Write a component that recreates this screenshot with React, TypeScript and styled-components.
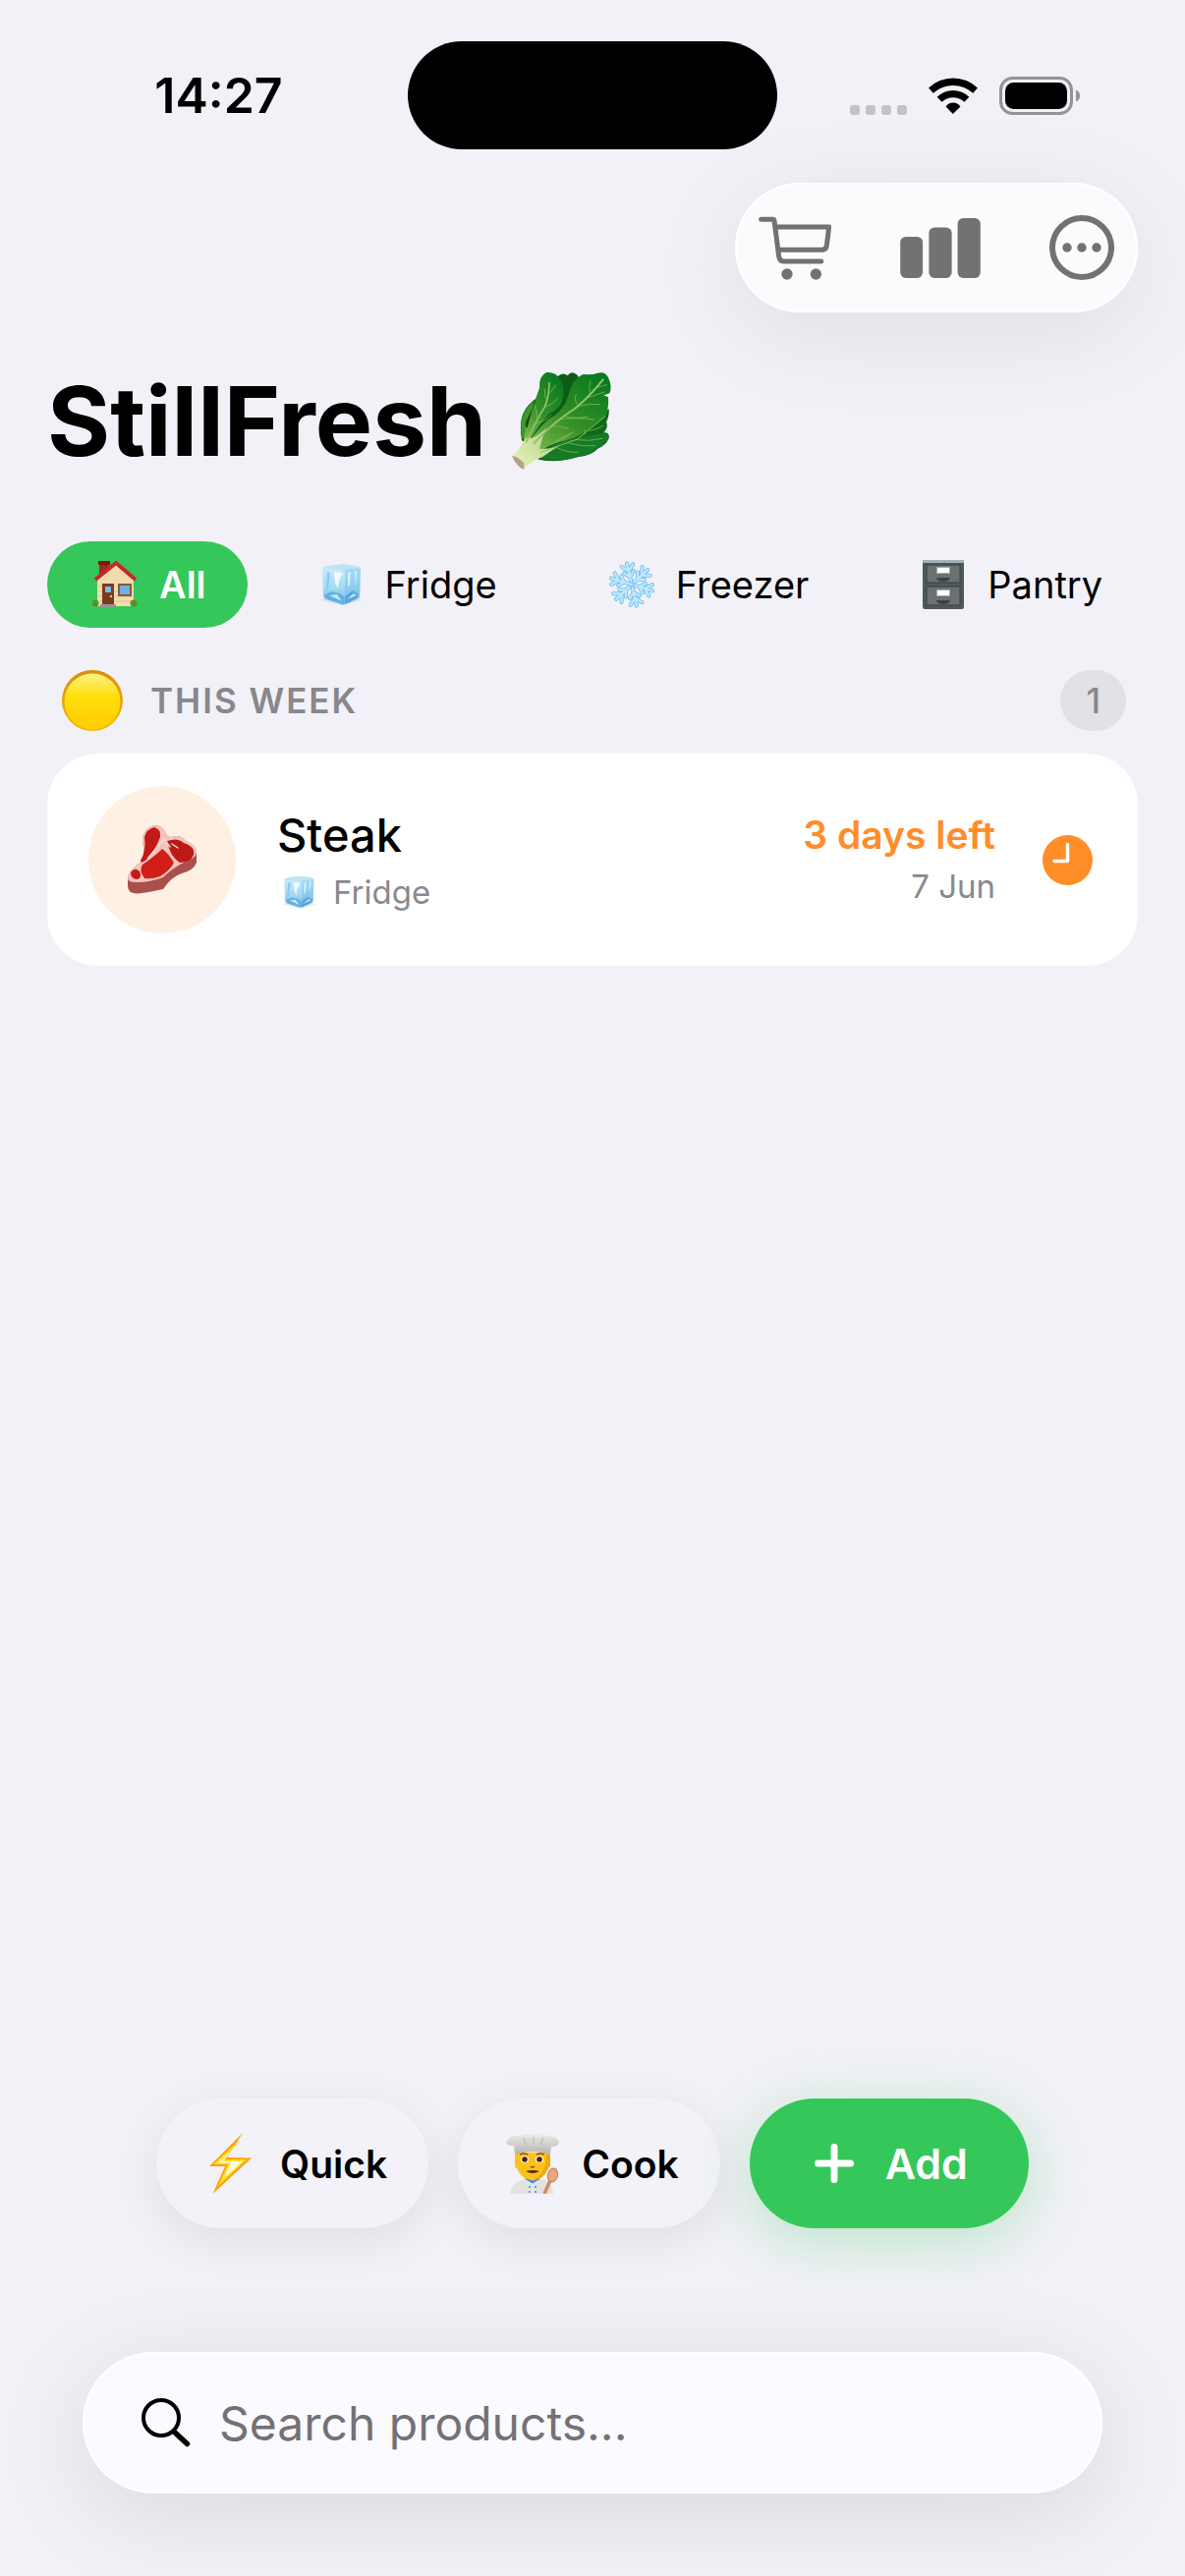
import { useState } from "react";
import styled, { createGlobalStyle } from "styled-components";

export default function App() {
  const [tab, setTab] = useState("All");
  const [search, setSearch] = useState("");

  return (
    <Page>
      <GlobalStyle />
      {/* status bar */}
      <StatusBar>
        <Time>14:27</Time>
        <Island />
        <StatusIcons>
          <SignalIcon />
          <WifiIcon />
          <BatteryIcon />
        </StatusIcons>
      </StatusBar>

      <Toolbar>
        <ToolbarButton aria-label="Shopping list">
          <CartIcon />
        </ToolbarButton>
        <ToolbarButton aria-label="Statistics">
          <BarsIcon />
        </ToolbarButton>
        <ToolbarButton aria-label="More">
          <MoreIcon />
        </ToolbarButton>
      </Toolbar>

      <Title>
        StillFresh
        <LettuceIcon />
      </Title>

      {/* places */}
      <Tabs>
        {tabs.map(({ name, Icon }) => (
          <Tab key={name} $active={tab === name} onClick={() => setTab(name)}>
            <TabIcon>
              <Icon />
            </TabIcon>
            {name}
          </Tab>
        ))}
      </Tabs>

      {/* products */}
      <SectionHeader>
        <YellowDotIcon />
        <SectionTitle>THIS WEEK</SectionTitle>
        <Count>1</Count>
      </SectionHeader>
      <ProductCard>
        <Avatar>
          <SteakIcon />
        </Avatar>
        <Info>
          <ProductName>Steak</ProductName>
          <Place>
            <IceIcon size={34} />
            Fridge
          </Place>
        </Info>
        <Expiry>
          <DaysLeft>3 days left</DaysLeft>
          <ExpiryDate>7 Jun</ExpiryDate>
        </Expiry>
        <ClockIcon />
      </ProductCard>

      {/* actions */}
      <Actions>
        <ActionButton>
          <ActionIcon>
            <BoltIcon />
          </ActionIcon>
          Quick
        </ActionButton>
        <ActionButton>
          <ActionIcon>
            <ChefIcon />
          </ActionIcon>
          Cook
        </ActionButton>
        <AddButton>
          <PlusIcon />
          Add
        </AddButton>
      </Actions>

      <SearchBar>
        <SearchIcon />
        <SearchInput
          type="text"
          aria-label="Search products"
          placeholder="Search products..."
          value={search}
          onChange={(e) => setSearch(e.target.value)}
        />
      </SearchBar>
    </Page>
  );
}

/* ---------- icons ---------- */

function SignalIcon() {
  return (
    <SignalSvg width="58" height="10" viewBox="0 0 58 10" fill="#c3c2c8">
      <rect width="10" height="10" rx="3" />
      <rect x="16" width="10" height="10" rx="3" />
      <rect x="32" width="10" height="10" rx="3" />
      <rect x="48" width="10" height="10" rx="3" />
    </SignalSvg>
  );
}

function WifiIcon() {
  return (
    <svg width="50" height="37" viewBox="286 56 151 112">
      <path d="M286 88A108 108 0 0 1 437 88L423 104A91 91 0 0 0 300 104Z" />
      <path d="M312 116A69 69 0 0 1 411 116L396 131A50 50 0 0 0 327 131Z" />
      <path d="M339 145A27 27 0 0 1 384 145L361 168Z" />
    </svg>
  );
}

function BatteryIcon() {
  return (
    <svg width="82" height="39" viewBox="0 0 82 39">
      <rect
        x="1.5"
        y="1.5"
        width="72"
        height="36"
        rx="12"
        fill="none"
        stroke="#939297"
        strokeWidth="3"
      />
      <rect x="6" y="6" width="63" height="27" rx="8.5" />
      <path d="M78 13.5Q82 15 82 19.5T78 25.5Z" fill="#939297" />
    </svg>
  );
}

function CartIcon() {
  return (
    <svg width="74" height="65" viewBox="129 149 222 195">
      <g
        fill="none"
        stroke="#727272"
        strokeWidth="15"
        strokeLinecap="round"
        strokeLinejoin="round"
      >
        <path d="M137 159H173Q176 159 177 163L191 272Q193 287 206 287H320" />
        <path d="M182 182H344L337 239Q335 252 322 252H194" />
      </g>
      <circle cx="216" cy="326" r="17" fill="#727272" />
      <circle cx="304" cy="326" r="17" fill="#727272" />
    </svg>
  );
}

function BarsIcon() {
  return (
    <svg width="82" height="61" viewBox="564 156 246 184" fill="#727272">
      <rect x="564" y="213" width="69" height="127" rx="17" />
      <rect x="652" y="185" width="70" height="155" rx="17" />
      <rect x="740" y="156" width="70" height="184" rx="17" />
    </svg>
  );
}

function MoreIcon() {
  return (
    <svg width="66" height="66" viewBox="0 0 66 66" fill="#727272">
      <circle cx="33" cy="33" r="30" fill="none" stroke="#727272" strokeWidth="6" />
      <circle cx="18" cy="33" r="4.7" />
      <circle cx="33" cy="33" r="4.7" />
      <circle cx="48" cy="33" r="4.7" />
    </svg>
  );
}

function LettuceIcon() {
  return (
    <svg width="104" height="104" viewBox="63 54 312 312">
      <defs>
        <linearGradient id="leaf" x1="0.1" y1="1" x2="0.8" y2="0">
          <stop offset="0" stopColor="#7cb84a" />
          <stop offset="0.45" stopColor="#358f27" />
          <stop offset="1" stopColor="#077a1e" />
        </linearGradient>
        <linearGradient id="stem" x1="0" y1="1" x2="1" y2="0">
          <stop offset="0" stopColor="#f0f3c4" />
          <stop offset="1" stopColor="#a9d07c" />
        </linearGradient>
      </defs>
      <path
        d="M96 268Q88 215 100 186Q112 158 142 138Q160 100 206 72Q222 58 236 70Q248 52 266 68L290 120L220 220L120 282Z"
        fill="#0c5c16"
      />
      <path
        d="M97 264Q88 212 103 184Q116 160 134 148Q120 210 108 262Z"
        fill="#3f962c"
      />
      <path
        d="M150 108Q148 70 172 60Q200 58 214 82Q228 108 222 138Q216 170 184 184Q158 206 118 272L102 266Q108 222 126 178Q138 156 140 136Z"
        fill="url(#leaf)"
      />
      <path
        d="M146 326L160 290L240 258L362 172Q364 194 354 212Q362 226 346 244Q364 240 362 262Q352 284 330 292Q310 314 270 318Q210 338 146 326Z"
        fill="#11691c"
      />
      <path
        d="M150 322Q170 286 232 268Q300 252 346 246Q364 242 361 260Q350 282 330 290Q306 314 270 317Q210 334 150 322Z"
        fill="#167b25"
      />
      <path
        d="M114 284Q132 246 176 204Q222 182 238 132Q250 78 284 66Q312 68 328 62Q352 56 361 78Q373 104 364 124L346 130L360 136Q362 158 358 174Q356 198 320 216Q280 258 222 270Q176 280 146 306Z"
        fill="url(#leaf)"
      />
      <path
        d="M148 302Q204 262 262 236Q236 264 184 280Z"
        fill="#84b94c"
        opacity="0.6"
      />
      <path d="M112 204Q102 224 113 230Q122 190 132 164Z" fill="#0b4d12" />
      <path
        d="M66 316Q84 304 104 266Q112 252 124 262Q150 252 172 228Q160 254 150 294Q178 294 206 287Q178 304 160 318Q124 330 104 356Q80 342 66 316Z"
        fill="url(#stem)"
      />
      <g fill="none" stroke="#8fc46a" strokeLinecap="round">
        <path d="M110 272Q140 206 166 166Q180 132 180 92" strokeWidth="5" />
        <path
          d="M132 218Q166 212 186 190M144 200Q142 178 136 162M166 166Q190 160 206 138M172 148Q164 126 166 112M178 126Q192 112 200 100"
          strokeWidth="2"
        />
        <path d="M134 276Q190 214 262 168Q310 126 344 82" strokeWidth="6" />
        <path
          d="M208 204Q252 196 318 204M226 192Q240 204 296 196M258 168Q290 154 334 158M266 160Q254 140 262 128M296 138Q320 130 348 120M304 128Q300 102 306 84M324 106Q344 102 356 98M188 224Q212 222 238 232"
          strokeWidth="2"
        />
        <path d="M154 304Q220 280 266 264Q306 232 350 194" strokeWidth="3" />
        <path
          d="M200 288Q230 306 268 304M238 276Q280 288 320 284M262 266Q302 272 342 262M286 250L290 236M302 238Q330 234 344 222"
          strokeWidth="2"
        />
      </g>
      <path d="M66 316Q80 312 104 338L102 357Q80 348 66 316Z" fill="#b5a285" />
    </svg>
  );
}

function HouseIcon() {
  return (
    <svg width="46" height="48" viewBox="0 0 46 48">
      <rect x="7" y="1" width="10" height="18" fill="#a8261f" />
      <rect x="6" y="0" width="12" height="4" fill="#7f1914" />
      <path d="M5 19L24 2L42 19V46H5Z" fill="#f2dcae" />
      <path d="M6 26H42M6 31H42M6 36H42M6 41H42" stroke="#dfc492" />
      <path
        d="M3 19L24 2L44 19"
        fill="none"
        stroke="#c8282b"
        strokeWidth="4"
        strokeLinejoin="round"
      />
      <rect x="10" y="23" width="12" height="21" fill="#7c3a22" />
      <rect x="13" y="26" width="6" height="6" fill="#7fbbe8" />
      <circle cx="19" cy="36" r="1.2" fill="#f5c542" />
      <rect x="26" y="23" width="14" height="13" fill="#8a5a3c" />
      <rect x="28" y="25" width="10" height="9" fill="#6fb0e3" />
      <circle cx="3" cy="43" r="3.5" fill="#5c8f2c" />
      <circle cx="42" cy="43" r="3.5" fill="#5c8f2c" />
      <rect x="8" y="44" width="16" height="3" fill="#9a9490" />
    </svg>
  );
}

function IceIcon({ size = 44 }: { size?: number }) {
  return (
    <svg width={size} height={size} viewBox="0 0 44 44">
      <defs>
        <linearGradient id="iceFront" x1="0" y1="0" x2="0" y2="1">
          <stop offset="0" stopColor="#d3effb" />
          <stop offset="0.6" stopColor="#a4d8f4" />
          <stop offset="1" stopColor="#6db6e4" />
        </linearGradient>
        <linearGradient id="iceSide" x1="0" y1="0" x2="0" y2="1">
          <stop offset="0" stopColor="#a8dbf5" />
          <stop offset="1" stopColor="#74bde9" />
        </linearGradient>
      </defs>
      <path d="M0 38L24 43L44 38L24 30Z" fill="#d5dde8" opacity="0.7" />
      <path
        d="M3 6Q3 3 8 3L24 1L38 3Q42 3 42 7L41 34Q41 36 38 37L26 42Q24 43 22 42L7 37Q4 36 4 33Z"
        fill="url(#iceFront)"
      />
      <path d="M26 6L42 5L41 34Q41 36 38 37L26 42Z" fill="url(#iceSide)" />
      <path d="M4 6L25 7L41 5L38 3L24 1L8 3Z" fill="#bfe3f3" />
      <path d="M8 9L11 10L9 27L7 29Z" fill="#8accf0" />
      <path d="M15 9L24 10L20 18L19 26L16 20Z" fill="#eefaff" />
      <path d="M29 10L32 9L31 22L29 25ZM36 9L38 8L37 24Z" fill="#d6f0fc" />
      <path d="M5 33L12 29L21 31L25 34L25 42L8 37Z" fill="#62afe2" />
      <path d="M26 34L34 28L40 32L38 36L26 42Z" fill="#58a6dc" />
      <path d="M10 33L18 32L23 39ZM28 37L35 31L38 33Z" fill="#bfe5f9" />
    </svg>
  );
}

function SnowflakeIcon() {
  return (
    <svg width="50" height="50" viewBox="-25 -25 50 50">
      {[0, 60, 120, 180, 240, 300].map((angle) => (
        <g key={angle} transform={`rotate(${angle - 13})`} fill="none" strokeLinecap="round">
          <path
            d="M0 0V-22M0 -8L-5 -13M0 -8L5 -13M0 -14L-6 -20M0 -14L6 -20"
            stroke="#66bbf0"
            strokeWidth="4"
          />
          <path
            d="M0 0V-22M0 -8L-5 -13M0 -8L5 -13M0 -14L-6 -20M0 -14L6 -20"
            stroke="#bfe8fc"
            strokeWidth="2.4"
          />
        </g>
      ))}
    </svg>
  );
}

function CabinetIcon() {
  return (
    <svg width="42" height="50" viewBox="0 0 42 50">
      <rect width="42" height="50" rx="2" fill="#51585a" />
      <rect width="42" height="3" rx="1" fill="#a3b0b8" />
      <g fill="#6a7173" stroke="#3a4042">
        <rect x="4" y="5" width="34" height="18" />
        <rect x="4" y="27" width="34" height="19" />
      </g>
      <g fill="#fff" stroke="#a6a9a8">
        <rect x="14.5" y="7.5" width="13" height="6" />
        <rect x="14.5" y="30.5" width="13" height="6" />
      </g>
      <path
        d="M14 18H28Q27 22 21 22T14 18ZM14 41H28Q27 45 21 45T14 41Z"
        fill="#3c4143"
      />
    </svg>
  );
}

function YellowDotIcon() {
  return (
    <svg width="62" height="62" viewBox="0 0 62 62">
      <defs>
        <linearGradient id="dot" x1="0" y1="0" x2="0" y2="1">
          <stop offset="0" stopColor="#fff08a" />
          <stop offset="0.4" stopColor="#ffdf0d" />
          <stop offset="1" stopColor="#ffcc00" />
        </linearGradient>
        <linearGradient id="rim" x1="0" y1="0" x2="0" y2="1">
          <stop offset="0" stopColor="#d98f0c" />
          <stop offset="1" stopColor="#f2b705" />
        </linearGradient>
      </defs>
      <circle cx="31" cy="31" r="31" fill="url(#rim)" />
      <circle cx="31" cy="32" r="28.5" fill="url(#dot)" />
    </svg>
  );
}

function SteakIcon() {
  return (
    <svg width="72" height="70" viewBox="0 0 72 70">
      <path
        d="M28 0Q36 0 39 7Q40 12 46 12Q54 9 60 16Q71 20 71 28V38Q68 46 56 49Q46 52 37 65Q24 68 12 69.5Q1 70 1 62V53Q4 44 14 38Q19 32 17 22Q15 14 17 10Q20 2 28 0Z"
        fill="#a9504c"
      />
      <path
        d="M28 0Q36 0 39 7Q40 12 46 12Q54 9 60 16Q72 20 71 28Q70 34 58 38Q46 44 37 53Q24 58 10 58Q0 58 1 53Q4 44 14 38Q19 32 17 22Q15 14 17 10Q20 2 28 0Z"
        fill="#f5c3bd"
      />
      <path d="M28 2Q35 4 34 12Q30 24 20 35Q14 40 14 36Q20 26 18 12Q20 4 28 2Z" fill="#c31a16" />
      <path d="M36 24Q42 28 48 38Q44 46 34 52Q26 55 18 54Q12 46 16 40Q28 32 36 24Z" fill="#cf1f18" />
      <path d="M41 16Q52 12 58 18Q70 22 68 30Q66 38 54 38Q44 32 41 16Z" fill="#bd1915" />
      <path d="M4 48Q8 42 13 47Q16 53 11 55Q4 55 4 48Z" fill="#c31a16" />
      <path
        d="M22 33L38 14L44 22M46 19L52 23"
        fill="none"
        stroke="#f9dcd6"
        strokeWidth="1.5"
        strokeLinecap="round"
      />
    </svg>
  );
}

function ClockIcon() {
  return (
    <svg width="51" height="51" viewBox="0 0 51 51">
      <circle cx="25.5" cy="25.5" r="25.5" fill="#ff8d28" />
      <path
        d="M25.5 9.5V26.5H12"
        fill="none"
        stroke="#fff"
        strokeWidth="3.5"
        strokeLinecap="round"
        strokeLinejoin="round"
      />
    </svg>
  );
}

function BoltIcon() {
  return (
    <svg width="44" height="62" viewBox="0 0 44 62">
      <path d="M34 0L18.5 25L43 25.5L3.5 62L16 34H0Z" fill="#ffa200" />
      <path d="M31 7L16 27H38L9 54L19 32H4Z" fill="#ffdd33" />
      <path d="M27 14L13.5 29H34L15 46L22 30.5H9Z" fill="#fffcd0" />
    </svg>
  );
}

function ChefIcon() {
  return (
    <svg width="54" height="62" viewBox="0 0 54 62">
      <defs>
        <linearGradient id="hat" x1="0" y1="0" x2="0" y2="1">
          <stop offset="0" stopColor="#efeeeb" />
          <stop offset="1" stopColor="#b4b3b0" />
        </linearGradient>
      </defs>
      <path d="M4 62Q5 51 16 48L27 46L38 48Q47 50 48 62Z" fill="#e4e2de" />
      <path d="M20 46L27 51L34 46V50L29 52V62H25V52L20 50Z" fill="#dfe7f1" />
      <path d="M20 46L27 50L34 46" fill="none" stroke="#4f86cf" strokeWidth="2.5" />
      <path d="M24 54V62M30 54V62" stroke="#4f86cf" strokeWidth="1.5" strokeDasharray="2 3" />
      <path d="M9 20H45V34Q43 34 43 36Q38 48 27 48T11 36Q9 36 9 32Z" fill="#fcc21c" />
      <path d="M41 22H45V34Q43 34 43 36Q38 48 27 48Q41 42 41 22Z" fill="#eda912" />
      <ellipse cx="19" cy="27" rx="4" ry="3.5" fill="#fff" />
      <ellipse cx="34" cy="27" rx="4" ry="3.5" fill="#fff" />
      <circle cx="19" cy="27" r="2.8" fill="#402316" />
      <circle cx="34" cy="27" r="2.8" fill="#402316" />
      <path
        d="M14 22Q18 20 22 22M31 22Q35 20 39 22M25 34Q27 36 29 34"
        fill="none"
        stroke="#8c5414"
        strokeWidth="1.5"
      />
      <path d="M20 39Q27 37 34 39Q27 43 20 39Z" fill="#5d2415" />
      <path
        d="M9 22L8 13Q-1 13 1 8Q4 2 14 3Q20 -1 28 1Q36 -1 42 3Q52 3 54 9Q54 14 46 14L45 22Q27 16 9 22Z"
        fill="url(#hat)"
      />
      <path d="M18 5L20 12M28 4V11M38 5L35 12" stroke="#bdbcb9" strokeWidth="1.2" />
      <path d="M46 46L39 62" stroke="#cf8a5c" strokeWidth="3.5" />
      <ellipse cx="47.5" cy="43" rx="5" ry="7" transform="rotate(15 47.5 43)" fill="#eaa67c" stroke="#c67c50" />
    </svg>
  );
}

function PlusIcon() {
  return (
    <svg width="40" height="40" viewBox="0 0 40 40">
      <path d="M20 3.5V36.5M3.5 20H36.5" stroke="#fff" strokeWidth="7" strokeLinecap="round" />
    </svg>
  );
}

function SearchIcon() {
  return (
    <svg width="50" height="50" viewBox="0 0 50 50" fill="none" stroke="#000">
      <circle cx="20" cy="20" r="18" strokeWidth="4" />
      <path d="M33 34L46.5 46.5" strokeWidth="5.5" strokeLinecap="round" />
    </svg>
  );
}

const tabs = [
  { name: "All", Icon: HouseIcon },
  { name: "Fridge", Icon: IceIcon },
  { name: "Freezer", Icon: SnowflakeIcon },
  { name: "Pantry", Icon: CabinetIcon },
];

/* ---------- styles ---------- */

const GlobalStyle = createGlobalStyle`
  * {
    box-sizing: border-box;
  }
  body {
    margin: 0;
    background: #f2f1f7;
  }
  button, input {
    border: none;
    padding: 0;
    font: inherit;
    color: inherit;
    background: none;
  }
  svg {
    display: block;
    flex-shrink: 0;
  }
`;

const Page = styled.div`
  display: flex;
  flex-direction: column;
  min-height: 100vh;
  padding: 42px 48px 84px;
  overflow: hidden;
  font-family: Inter, "Liberation Sans", sans-serif;
  color: #000;
  background: #f2f1f7;
`;

const StatusBar = styled.div`
  display: grid;
  grid-template-columns: 1fr 376px 1fr;
  align-items: center;
  margin: 0 -18px;
`;
const Time = styled.div`
  text-align: center;
  font-size: 50px;
  line-height: 60px;
  font-weight: 600;
`;
const Island = styled.div`
  height: 110px;
  border-radius: 55px;
  background: #000;
`;
const StatusIcons = styled.div`
  display: flex;
  justify-content: center;
  align-items: center;
  gap: 22px;
  padding-right: 4px;
`;
const SignalSvg = styled.svg`
  align-self: flex-end;
`;

const Toolbar = styled.div`
  display: flex;
  align-self: flex-end;
  align-items: center;
  gap: 70px;
  height: 132px;
  margin-top: 34px;
  padding: 0 24px;
  border-radius: 66px;
  background: #fbfbfd;
  box-shadow: inset 0 0 0 2px #fff, 0 20px 100px rgba(0, 0, 0, 0.08);
`;
const ToolbarButton = styled.button`
  cursor: pointer;
`;

const Title = styled.h1`
  display: flex;
  align-items: center;
  gap: 25px;
  margin: 51px 0 62px;
  font-size: 98px;
  line-height: 120px;
  font-weight: 700;
`;

const Tabs = styled.div`
  display: flex;
  gap: 26px;
`;
const Tab = styled.button<{ $active: boolean }>`
  display: flex;
  align-items: center;
  gap: 18px;
  height: 88px;
  padding: 0 42px;
  border-radius: 44px;
  font-size: 38px;
  font-weight: ${({ $active }) => ($active ? 600 : 400)};
  color: ${({ $active }) => ($active ? "#fff" : "#000")};
  background: ${({ $active }) => ($active ? "#35c759" : "transparent")};
  cursor: pointer;
`;
const TabIcon = styled.span`
  display: flex;
  justify-content: center;
  width: 54px;
`;

const SectionHeader = styled.div`
  display: flex;
  align-items: center;
  margin: 43px 12px 23px 15px;
`;
const SectionTitle = styled.h2`
  flex: 1;
  margin: 0 0 0 28px;
  font-size: 35px;
  line-height: 44px;
  font-weight: 600;
  letter-spacing: 2px;
  color: #88878c;
`;
const Count = styled.span`
  padding: 8px 26px;
  border-radius: 31px;
  font-size: 35px;
  line-height: 46px;
  font-weight: 500;
  color: #88878c;
  background: #e2e1e7;
`;

const ProductCard = styled.article`
  display: flex;
  align-items: center;
  padding: 33px 46px 33px 42px;
  border-radius: 52px;
  background: #fff;
`;
const Avatar = styled.div`
  display: flex;
  align-items: center;
  justify-content: center;
  width: 150px;
  height: 150px;
  border-radius: 50%;
  background: #fff0e4;
`;
const Info = styled.div`
  flex: 1;
  margin-left: 42px;
  padding-top: 8px;
`;
const ProductName = styled.div`
  font-size: 47px;
  line-height: 58px;
  font-weight: 500;
`;
const Place = styled.div`
  display: flex;
  align-items: center;
  gap: 18px;
  padding-left: 5px;
  font-size: 33px;
  line-height: 58px;
  color: #8a898e;
`;
const Expiry = styled.div`
  margin-right: 48px;
  padding-top: 2px;
  text-align: right;
  line-height: 52px;
`;
const DaysLeft = styled.div`
  font-size: 39px;
  font-weight: 600;
  color: #ff8d28;
`;
const ExpiryDate = styled.div`
  font-size: 33px;
  color: #8a898e;
`;

const Actions = styled.div`
  display: flex;
  justify-content: center;
  gap: 30px;
  margin-top: auto;
`;
const ActionButton = styled.button`
  display: flex;
  align-items: center;
  gap: 22px;
  height: 132px;
  padding: 0 42px 0 48px;
  border-radius: 66px;
  font-size: 39px;
  font-weight: 600;
  background: #f3f2f8;
  box-shadow: 0 12px 48px rgba(0, 0, 0, 0.08);
  cursor: pointer;
`;
const ActionIcon = styled.span`
  display: flex;
  justify-content: center;
  width: 56px;
`;
const AddButton = styled(ActionButton)`
  gap: 32px;
  padding: 0 62px 0 66px;
  font-size: 43px;
  color: #fff;
  background: #35c759;
  box-shadow: 0 12px 60px rgba(53, 199, 89, 0.3);
`;

const SearchBar = styled.label`
  display: flex;
  align-items: center;
  gap: 29px;
  height: 144px;
  margin: 126px 36px 0;
  padding: 0 60px;
  border-radius: 72px;
  background: #fbfaff;
  box-shadow: inset 0 0 0 2px #fff, 0 20px 100px rgba(0, 0, 0, 0.1);
`;
const SearchInput = styled.input`
  flex: 1;
  min-width: 0;
  height: 80px;
  outline: none;
  font-size: 48px;

  &::placeholder {
    color: #727275;
    opacity: 1;
  }
`;
